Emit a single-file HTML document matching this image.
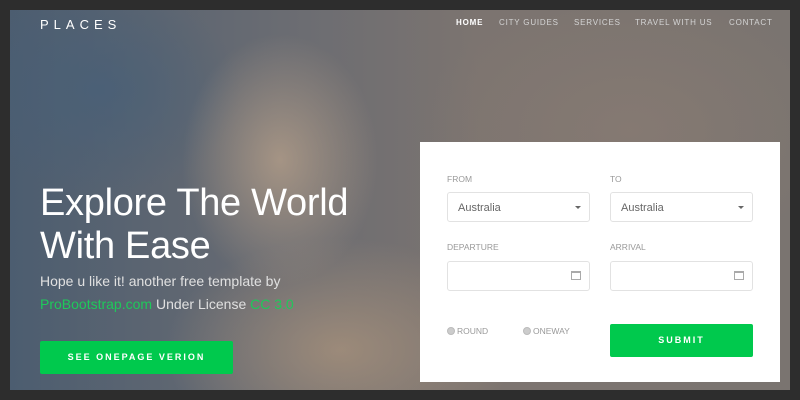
<!DOCTYPE html>
<html><head><style>
*{margin:0;padding:0;box-sizing:border-box}
body{width:800px;height:400px;background:#2d2d2d;font-family:"Liberation Sans",sans-serif;overflow:hidden;position:relative}
.hero{position:absolute;left:10px;top:10px;width:780px;height:380px;overflow:hidden;
background:
radial-gradient(ellipse 140px 180px at 270px 150px,rgba(190,165,140,.7),rgba(190,165,140,0) 70%),
radial-gradient(ellipse 250px 160px at 330px 340px,rgba(175,150,125,.7),rgba(175,150,125,0) 70%),
radial-gradient(ellipse 300px 200px at 620px 120px,rgba(140,125,115,.6),rgba(140,125,115,0) 70%),
radial-gradient(ellipse 200px 150px at 90px 80px,rgba(70,95,120,.7),rgba(70,95,120,0) 70%),
linear-gradient(90deg,#4c5d70 0%,#6a6c72 35%,#7c7470 60%,#7a7470 100%);}
.logo{position:absolute;left:30px;top:7px;color:#fff;font-size:13px;letter-spacing:5px}
.nav{position:absolute;top:8px;right:0;font-size:8px;letter-spacing:0.8px;color:#d4d4d4}
.nav span{position:absolute;white-space:nowrap}
h1{position:absolute;left:30px;top:172px;color:#fff;font-weight:normal;font-size:38px;line-height:43px;letter-spacing:-0.3px}
.p{position:absolute;left:30px;color:#e0e0e0;font-size:14px}
.g{color:#1ec95a}
.btn{position:absolute;background:#00c94d;color:#fff;font-weight:bold;font-size:9px;letter-spacing:2px;text-align:center;border-radius:2px}
.card{position:absolute;left:410px;top:132px;width:360px;height:240px;background:#fff}
.lbl{position:absolute;font-size:8.5px;color:#999}
.inp{position:absolute;width:143px;height:30px;border:1px solid #e2e2e2;border-radius:3px;font-size:11px;color:#666;padding:9px 0 0 10px}
.car{position:absolute;right:8px;top:13px;border-left:3px solid transparent;border-right:3px solid transparent;border-top:3px solid #666}
.cal{position:absolute;right:8px;top:9px;width:10px;height:9px;border:1px solid #aaa;border-top-width:2px}
.rad{position:absolute;font-size:8.5px;color:#999}
.rad i{display:inline-block;width:8px;height:8px;border-radius:50%;background:#ccc;border:1px solid #bbb;margin-right:2px;vertical-align:-1px}
</style></head><body>
<div class="hero">
<div class="logo">PLACES</div>
<div class="nav">
<span style="left:-334px;color:#fff;font-weight:bold">HOME</span>
<span style="left:-291px">CITY GUIDES</span>
<span style="left:-216px">SERVICES</span>
<span style="left:-155px">TRAVEL WITH US</span>
<span style="left:-61px">CONTACT</span>
</div>
<h1>Explore The World<br>With Ease</h1>
<div class="p" style="top:263px">Hope u like it! another free template by</div>
<div class="p" style="top:286px"><span class="g">ProBootstrap.com</span> Under License <span class="g">CC 3.0</span></div>
<div class="btn" style="left:30px;top:331px;width:193px;height:33px;line-height:33px">SEE ONEPAGE VERION</div>
<div class="card">
<div class="lbl" style="left:27px;top:32px">FROM</div>
<div class="lbl" style="left:190px;top:32px">TO</div>
<div class="inp" style="left:27px;top:50px">Australia<div class="car"></div></div>
<div class="inp" style="left:190px;top:50px">Australia<div class="car"></div></div>
<div class="lbl" style="left:27px;top:100px">DEPARTURE</div>
<div class="lbl" style="left:190px;top:100px">ARRIVAL</div>
<div class="inp" style="left:27px;top:119px"><div class="cal"></div></div>
<div class="inp" style="left:190px;top:119px"><div class="cal"></div></div>
<div class="rad" style="left:27px;top:184px"><i></i>ROUND</div>
<div class="rad" style="left:103px;top:184px"><i></i>ONEWAY</div>
<div class="btn" style="left:190px;top:182px;width:143px;height:33px;line-height:33px">SUBMIT</div>
</div>
</div>
</body></html>
